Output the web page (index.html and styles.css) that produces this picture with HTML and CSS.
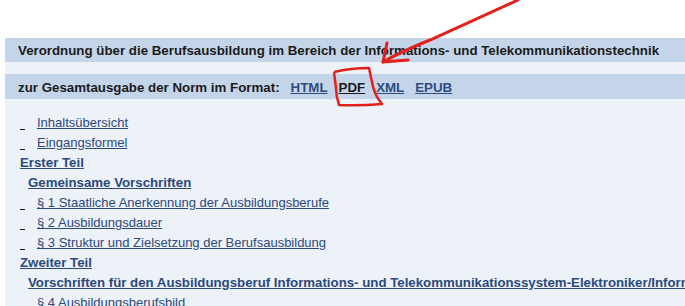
FILE: index.html
```html
<!DOCTYPE html>
<html lang="de">
<head>
<meta charset="utf-8">
<title>Verordnung über die Berufsausbildung</title>
<link rel="stylesheet" href="styles.css">
</head>
<body>
<div class="page">
  <div class="bar title-bar">Verordnung über die Berufsausbildung im Bereich der Informations- und Telekommunikationstechnik</div>
  <div class="band"></div>
  <div class="bar format-bar">
    <span>zur Gesamtausgabe der Norm im Format:</span>
    <a class="fmt" href="#">HTML</a>
    <a class="fmt current" href="#">PDF</a>
    <a class="fmt" href="#">XML</a>
    <a class="fmt" href="#">EPUB</a>
  </div>
  <div class="toc">
    <div class="row item"><span class="mark"></span><a href="#">Inhaltsübersicht</a></div>
    <div class="row item"><span class="mark"></span><a href="#">Eingangsformel</a></div>
    <div class="row lvl1"><a href="#">Erster Teil</a></div>
    <div class="row lvl2"><a href="#">Gemeinsame Vorschriften</a></div>
    <div class="row item"><span class="mark"></span><a href="#">§ 1 Staatliche Anerkennung der Ausbildungsberufe</a></div>
    <div class="row item"><span class="mark"></span><a href="#">§ 2 Ausbildungsdauer</a></div>
    <div class="row item"><span class="mark"></span><a href="#">§ 3 Struktur und Zielsetzung der Berufsausbildung</a></div>
    <div class="row lvl1"><a href="#">Zweiter Teil</a></div>
    <div class="row lvl2"><a href="#">Vorschriften für den Ausbildungsberuf Informations- und Telekommunikationssystem-Elektroniker/Informationssystem-Elektronikerin</a></div>
    <div class="row item"><span class="mark"></span><a href="#">§ 4 Ausbildungsberufsbild</a></div>
  </div>
</div>
<svg class="annot" width="685" height="306" viewBox="0 0 685 306" aria-hidden="true">
  <path d="M518 0 Q470 22 430 40 Q400 52 383 62" fill="none" stroke="#e3201b" stroke-width="3" stroke-linecap="round"/>
  <path d="M387 43 L383 62 L408 60" fill="none" stroke="#e3201b" stroke-width="3" stroke-linecap="round" stroke-linejoin="round"/>
  <path d="M334 72 Q351 68 369 68 L372 82 Q374 93 379 100 L382 104 Q360 106 339 105 Q336 96 336 88 Q335 80 334 72" fill="none" stroke="#e3201b" stroke-width="2.5" stroke-linejoin="round"/>
</svg>
</body>
</html>
```
FILE: styles.css
```css
html, body {
  margin: 0;
  padding: 0;
  background: #ffffff;
}
body {
  font-family: "Liberation Sans", Arial, sans-serif;
  width: 685px;
  height: 306px;
  overflow: hidden;
  position: relative;
}
.page {
  margin: 38px 0 0 5px;
  background: #edf1f8;
  height: 268px;
  overflow: hidden;
}
.bar {
  background: #c4d5ea;
  color: #1b1b1b;
  font-weight: bold;
  font-size: 13.3px;
  white-space: nowrap;
  display: flex;
  align-items: center;
  padding-left: 13px;
}
.title-bar {
  height: 24px;
}
.band {
  height: 12px;
}
.format-bar {
  height: 25px;
  padding-top: 1px;
  box-sizing: border-box;
}
.fmt {
  color: #2d4c80;
  text-decoration: underline;
  margin-left: 11px;
}
.fmt.current {
  color: #1b1b1b;
}
.toc {
  padding: 14px 0 0 15px;
  font-size: 13px;
}
.row {
  height: 20px;
  line-height: 20px;
  white-space: nowrap;
  display: flex;
  align-items: center;
}
.row a {
  color: #2b4a7c;
  text-decoration: underline;
}
.lvl1 a, .lvl2 a {
  font-weight: bold;
  font-size: 13.25px;
}
.lvl2 {
  padding-left: 8px;
}
.mark {
  width: 5px;
  height: 14px;
  margin-right: 12px;
  border-bottom: 1px solid #1b1b1b;
  box-sizing: border-box;
  align-self: flex-end;
  margin-bottom: 3px;
}
.annot {
  position: absolute;
  left: 0;
  top: 0;
  pointer-events: none;
}
```
